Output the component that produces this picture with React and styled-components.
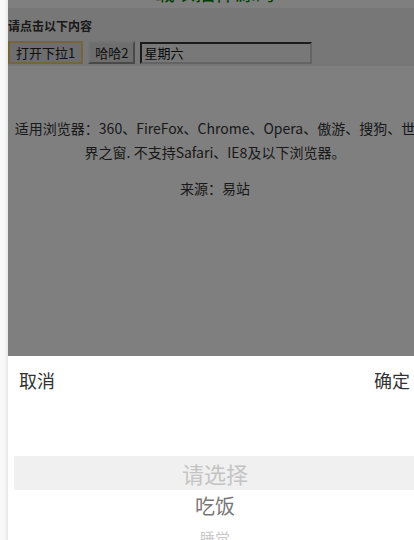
import React from "react";
import styled, { createGlobalStyle } from "styled-components";

const GlobalStyle = createGlobalStyle`
  html, body {
    margin: 0;
    padding: 0;
    background: #ffffff;
    overflow: hidden;
  }
  body {
    font-family: "Noto Sans CJK SC", "Noto Sans", sans-serif;
    color: #333;
  }
`;

const FONT = `"Noto Sans CJK SC", "Noto Sans", sans-serif`;

const Page = styled.div`
  display: flex;
  height: 540px;
  overflow: hidden;
`;

const Gutter = styled.div`
  flex: 0 0 8px;
  background: linear-gradient(to right, #fafafa 0, #f6f6f6 5px, #e9e9e9 7px, #e9e9e9 8px);
`;

const Main = styled.div`
  position: relative;
  flex: 0 0 414px;
  height: 540px;
  overflow: hidden;
  background: #fff;
`;

const Title = styled.h1`
  margin: -21px 0 0;
  height: 29px;
  line-height: 28px;
  font-size: 20px;
  font-weight: normal;
  text-align: center;
  color: #007a00;
  font-family: ${FONT};
`;

const Toolbar = styled.div`
  background: #eeeeee;
  padding: 9px 0 2px;
`;

const Label = styled.div`
  font-size: 12px;
  font-weight: bold;
  line-height: 18px;
  color: #333;
`;

const Row = styled.div`
  display: flex;
  align-items: center;
  gap: 5px;
  margin-top: 6px;
  height: 23px;
`;

const Button = styled.button`
  height: 23px;
  padding: 0 ${(p) => (p.$focused ? "6px" : "5px")};
  font-family: ${FONT};
  font-size: 13px;
  color: #222;
  background: #dcdcdc;
  border: ${(p) => (p.$focused ? "2px solid #ecc878" : "2px outset #e6e6e6")};
  line-height: 1;
`;

const Input = styled.input`
  box-sizing: border-box;
  width: 172px;
  height: 22px;
  padding: 0 2px;
  font-family: ${FONT};
  font-size: 13px;
  color: #111;
  background: #f0f0f0;
  border: 2px inset #c8c8c8;
  border-top-color: #8a8a8a;
  border-left-color: #8a8a8a;
`;

const Content = styled.div`
  padding-top: 50px;
  text-align: center;
  font-size: 14px;
  line-height: 24px;
  color: #333;
`;

const Para = styled.p`
  margin: 0 0 12px;
`;

const Mask = styled.div`
  position: absolute;
  inset: 0;
  display: flex;
  flex-direction: column;
`;

const Dim = styled.div`
  flex: 0 0 356px;
  background: rgba(0, 0, 0, 0.5);
`;

const Sheet = styled.div`
  flex: 1 0 auto;
  background: #fff;
`;

const SheetHead = styled.div`
  display: flex;
  justify-content: space-between;
  align-items: center;
  height: 48px;
  padding: 0 12px 0 11px;
  font-size: 18px;
  color: #333;
`;

const Wheel = styled.div`
  margin: 0 6px;
  padding-top: 52px;
  text-align: center;
`;

const Item = styled.div`
  height: ${(p) => (p.$selected ? "34px" : "32px")};
  line-height: ${(p) => (p.$selected ? "34px" : "32px")};
  font-size: ${(p) => p.$size}px;
  color: ${(p) => p.$color};
  background: ${(p) => (p.$selected ? "#f0f0f0" : "transparent")};
`;

export default function App() {
  return (
    <>
      <GlobalStyle />
      <Page>
        <Gutter />
        <Main>
          <Title>载以插件源码</Title>
          <Toolbar>
            <Label>请点击以下内容</Label>
            <Row>
              <Button $focused>打开下拉1</Button>
              <Button>哈哈2</Button>
              <Input defaultValue="星期六" readOnly />
            </Row>
          </Toolbar>
          <Content>
            <Para>
              适用浏览器：360、FireFox、Chrome、Opera、傲游、搜狗、世
              <br />
              界之窗. 不支持Safari、IE8及以下浏览器。
            </Para>
            <Para>来源：易站</Para>
          </Content>
          <Mask>
            <Dim />
            <Sheet>
              <SheetHead>
                <span>取消</span>
                <span>确定</span>
              </SheetHead>
              <Wheel>
                <Item $selected $size={22} $color="#c4c4c4">请选择</Item>
                <Item $size={20} $color="#777">吃饭</Item>
                <Item $size={15} $color="#c8c8c8">睡觉</Item>
              </Wheel>
            </Sheet>
          </Mask>
        </Main>
      </Page>
    </>
  );
}
